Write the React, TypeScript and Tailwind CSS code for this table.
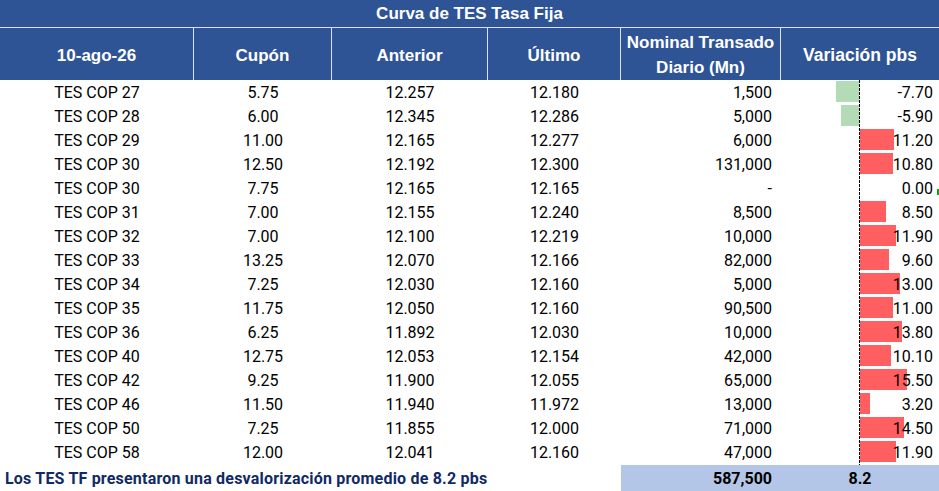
const rows = [
  { name: "TES COP 27", cupon: "5.75", anterior: "12.257", ultimo: "12.180", nominal: "1,500", v: -7.7 },
  { name: "TES COP 28", cupon: "6.00", anterior: "12.345", ultimo: "12.286", nominal: "5,000", v: -5.9 },
  { name: "TES COP 29", cupon: "11.00", anterior: "12.165", ultimo: "12.277", nominal: "6,000", v: 11.2 },
  { name: "TES COP 30", cupon: "12.50", anterior: "12.192", ultimo: "12.300", nominal: "131,000", v: 10.8 },
  { name: "TES COP 30", cupon: "7.75", anterior: "12.165", ultimo: "12.165", nominal: "-", v: 0 },
  { name: "TES COP 31", cupon: "7.00", anterior: "12.155", ultimo: "12.240", nominal: "8,500", v: 8.5 },
  { name: "TES COP 32", cupon: "7.00", anterior: "12.100", ultimo: "12.219", nominal: "10,000", v: 11.9 },
  { name: "TES COP 33", cupon: "13.25", anterior: "12.070", ultimo: "12.166", nominal: "82,000", v: 9.6 },
  { name: "TES COP 34", cupon: "7.25", anterior: "12.030", ultimo: "12.160", nominal: "5,000", v: 13.0 },
  { name: "TES COP 35", cupon: "11.75", anterior: "12.050", ultimo: "12.160", nominal: "90,500", v: 11.0 },
  { name: "TES COP 36", cupon: "6.25", anterior: "11.892", ultimo: "12.030", nominal: "10,000", v: 13.8 },
  { name: "TES COP 40", cupon: "12.75", anterior: "12.053", ultimo: "12.154", nominal: "42,000", v: 10.1 },
  { name: "TES COP 42", cupon: "9.25", anterior: "11.900", ultimo: "12.055", nominal: "65,000", v: 15.5 },
  { name: "TES COP 46", cupon: "11.50", anterior: "11.940", ultimo: "11.972", nominal: "13,000", v: 3.2 },
  { name: "TES COP 50", cupon: "7.25", anterior: "11.855", ultimo: "12.000", nominal: "71,000", v: 14.5 },
  { name: "TES COP 58", cupon: "12.00", anterior: "12.041", ultimo: "12.160", nominal: "47,000", v: 11.9 },
];

const cols = "grid grid-cols-[194px_138px_156px_133px_160px_158px]";
const PX_PER_PB = 3.04;

function VarCell({ v }: { v: number }) {
  const w = Math.abs(v) * PX_PER_PB;
  return (
    <div className="relative h-full">
      {v < 0 && (
        <div className="absolute top-[1px] h-[21px] bg-[#b3dbb5]" style={{ left: 78 - w, width: w }} />
      )}
      {v > 0 && (
        <div className="absolute top-[1px] h-[21px] left-[79px] bg-[#ff5f60]" style={{ width: w }} />
      )}
      <div className="absolute left-[78px] top-0 h-full w-px bg-[linear-gradient(to_bottom,#000_0,#000_3px,transparent_3px,transparent_4px)] bg-[length:1px_4px]" />
      <div className="relative h-full flex items-center justify-end pr-[6px] pt-px">
        {v.toFixed(2)}
      </div>
    </div>
  );
}

export default function App() {
  return (
    <div className="w-[939px] h-[491px] bg-white overflow-hidden font-['Roboto',_sans-serif] text-[16px] text-black">
      <div className="h-[28px] bg-[#2f5496] border-b border-[#dce3f0] flex items-center justify-center text-white font-bold text-[17px] font-['Liberation_Sans',_sans-serif] pt-[1px]">
        Curva de TES Tasa Fija
      </div>
      <div className={`${cols} h-[52px] bg-[#2f5496] text-white font-bold text-[17px] font-['Liberation_Sans',_sans-serif]`}>
        <div className="flex items-center justify-center pt-[3px] border-r border-[#dce3f0]">10-ago-26</div>
        <div className="flex items-center justify-center pt-[3px] border-r border-[#dce3f0]">Cupón</div>
        <div className="flex items-center justify-center pt-[3px] border-r border-[#dce3f0]">Anterior</div>
        <div className="flex items-center justify-center pt-[3px] border-r border-[#dce3f0]">Último</div>
        <div className="flex items-center justify-center pt-[2px] text-center leading-[25px] border-r border-[#dce3f0]">
          Nominal Transado
          <br />
          Diario (Mn)
        </div>
        <div className="flex items-center justify-center pt-[3px] text-[17.5px]">Variación pbs</div>
      </div>
      {rows.map((r, i) => (
        <div key={i} className={`${cols} h-[24px] relative`}>
          <div className="flex items-center justify-center pt-px">{r.name}</div>
          <div className="flex items-center justify-center pt-px">{r.cupon}</div>
          <div className="flex items-center justify-center pt-px">{r.anterior}</div>
          <div className="flex items-center justify-center pt-px">{r.ultimo}</div>
          <div className="flex items-center justify-end pr-[9px] pt-px">{r.nominal}</div>
          <VarCell v={r.v} />
          {r.v === 0 && <div className="absolute right-0 top-[13px] w-[2px] h-[6px] bg-[#1a9a1a]" />}
        </div>
      ))}
      <div className="flex h-[27px] mt-[1px]">
        <div className="w-[621px] flex items-center pl-[5px] pt-px font-bold text-[16px] tracking-[0.2px] text-[#0f2a66]">
          Los TES TF presentaron una desvalorización promedio de 8.2 pbs
        </div>
        <div className="flex-1 bg-[#b4c6e7] grid grid-cols-[160px_158px] font-bold">
          <div className="flex items-center justify-end pr-[9px] pt-px">587,500</div>
          <div className="flex items-center justify-center pt-px">8.2</div>
        </div>
      </div>
    </div>
  );
}
